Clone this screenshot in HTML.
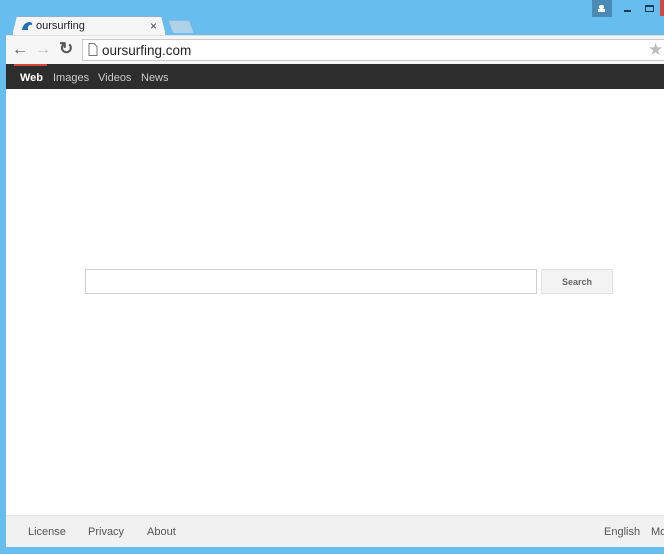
<!DOCTYPE html>
<html><head><style>
*{margin:0;padding:0;box-sizing:border-box}
body{width:664px;height:554px;background:#67bdee;position:relative;overflow:hidden;font-family:"Liberation Sans",Arial,sans-serif}
.abs{position:absolute}
</style></head><body>
<div class="abs" style="left:592px;top:0;width:20px;height:17px;background:#4a8bb5"></div>
<div class="abs" style="left:599px;top:5px;width:5px;height:4px;background:#fff;border-radius:2px"></div>
<div class="abs" style="left:598px;top:9px;width:7px;height:3px;background:#fff"></div>
<div class="abs" style="left:624px;top:10px;width:7px;height:2px;background:#1d3a55"></div>
<div class="abs" style="left:645px;top:5px;width:9px;height:7px;border:1px solid #1d3a55;border-top-width:2px"></div>
<div class="abs" style="left:660px;top:0;width:4px;height:16px;background:#cc4a42"></div>
<div class="abs" style="left:170px;top:20px;width:22px;height:13px;background:#aed2ea;border:1px solid #8fb8d6;border-bottom:none;transform:skewX(20deg);border-radius:2px 2px 0 0"></div>
<div class="abs" style="left:12px;top:16px;width:154px;height:20px;background:#f6f6f6;border:1px solid #8fb0cc;border-bottom:none;border-radius:4px 4px 0 0;clip-path:polygon(5px 0,149px 0,154px 20px,0 20px)"></div>
<svg class="abs" style="left:21px;top:21px" width="12" height="10"><path d="M1 9 Q2 2 8 1 Q12 1 11 4 Q8 3 7 6 L7 9 Z" fill="#1e6fb5"/></svg>
<div class="abs" style="left:36px;top:20px;font-size:11px;color:#222">oursurfing</div>
<div class="abs" style="left:150px;top:19px;font-size:12px;color:#444">×</div>
<div class="abs" style="left:6px;top:35px;width:658px;height:29px;background:#f6f6f6;border-top:1px solid #e0e0e0"></div>
<div class="abs" style="left:12px;top:41px;font-size:16px;color:#555;font-weight:bold">&#8592;</div>
<div class="abs" style="left:35px;top:41px;font-size:16px;color:#bbb;font-weight:bold">&#8594;</div>
<div class="abs" style="left:59px;top:39px;font-size:17px;color:#555;font-weight:bold">&#8635;</div>
<div class="abs" style="left:82px;top:39px;width:582px;height:22px;background:#fff;border:1px solid #c9c9c9;border-right:none"></div>
<svg class="abs" style="left:88px;top:43px" width="10" height="13"><path d="M1 .5h5l3 3v9h-8z" fill="#fff" stroke="#777"/></svg>
<div class="abs" style="left:102px;top:43px;font-size:13.5px;color:#222">oursurfing.com</div>
<div class="abs" style="left:648px;top:40px;font-size:17px;color:#bdbdbd">★</div>
<div class="abs" style="left:6px;top:64px;width:658px;height:25px;background:#2d2d2d"></div>
<div class="abs" style="left:14px;top:64px;width:33px;height:2px;background:#d04a3a"></div>
<div class="abs" style="left:20px;top:71px;font-size:11px;color:#fff;font-weight:bold;line-height:13px;padding-top:1px">Web</div>
<div class="abs" style="left:53px;top:72px;font-size:11px;color:#ccc">Images</div>
<div class="abs" style="left:98px;top:72px;font-size:11px;color:#ccc">Videos</div>
<div class="abs" style="left:141px;top:72px;font-size:11px;color:#ccc">News</div>
<div class="abs" style="left:6px;top:89px;width:658px;height:426px;background:#fff"></div>
<div class="abs" style="left:85px;top:269px;width:452px;height:25px;border:1px solid #d0d0d0;background:#fff"></div>
<div class="abs" style="left:541px;top:269px;width:72px;height:25px;border:1px solid #e0e0e0;background:#f3f3f3;font-size:9px;color:#666;text-align:center;line-height:24px;font-weight:bold">Search</div>
<div class="abs" style="left:6px;top:515px;width:658px;height:32px;background:#f1f1f1;border-top:1px solid #e4e4e4"></div>
<div class="abs" style="left:28px;top:525px;font-size:11px;color:#555;padding-top:1px">License</div>
<div class="abs" style="left:88px;top:525px;font-size:11px;color:#555;padding-top:1px">Privacy</div>
<div class="abs" style="left:147px;top:525px;font-size:11px;color:#555;padding-top:1px">About</div>
<div class="abs" style="left:604px;top:525px;font-size:11px;color:#555;padding-top:1px">English</div>
<div class="abs" style="left:651px;top:525px;font-size:11px;color:#555;padding-top:1px">Mo</div>
</body></html>
